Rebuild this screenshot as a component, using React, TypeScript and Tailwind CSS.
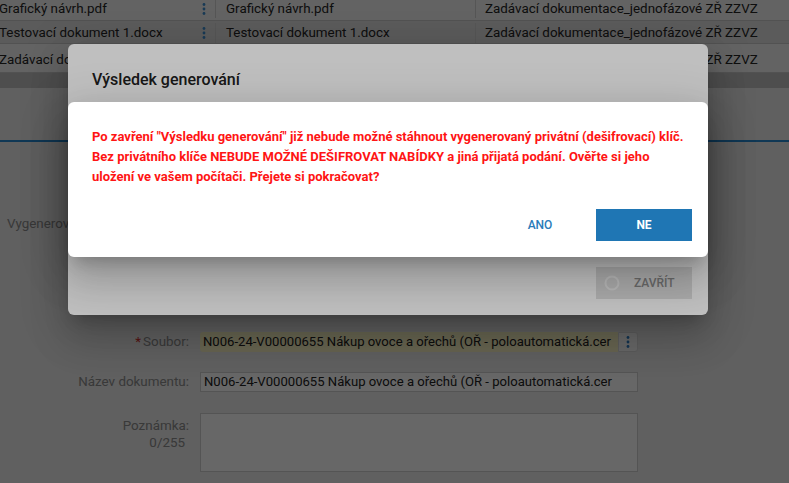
import React from "react";

function Dots({ color = "#3d8fd1" }: { color?: string }) {
  return (
    <svg width="4" height="14" viewBox="0 0 4 14" className="shrink-0">
      <circle cx="2" cy="2.5" r="1.4" fill={color} />
      <circle cx="2" cy="7" r="1.4" fill={color} />
      <circle cx="2" cy="11.5" r="1.4" fill={color} />
    </svg>
  );
}

function Row({ a, b, c, cls }: { a: string; b: string; c: string; cls: string }) {
  return (
    <div className={`flex border-b border-[#cbcbcb] ${cls}`}>
      <div className="w-[217px] shrink-0 flex items-center justify-between pr-[9px] border-r border-[#d4d4d4] -ml-[1px]">
        <span className="whitespace-nowrap">{a}</span>
        <Dots />
      </div>
      <div className="w-[260px] shrink-0 flex items-center pl-[10px] border-r border-[#d4d4d4]">
        <span className="whitespace-nowrap">{b}</span>
      </div>
      <div className="flex-1 flex items-center pl-[9px]">
        <span className="whitespace-nowrap">{c}</span>
      </div>
    </div>
  );
}

export default function App() {
  return (
    <div className="relative w-[789px] h-[483px] overflow-hidden bg-[#ececec] font-['Roboto',sans-serif]">
      {/* underlying page */}
      <div className="flex flex-col">
        <div className="bg-[#f6f6f6] text-[13.4px] text-[#262626]">
          <Row cls="h-[21px] pb-[2px]" a="Grafický návrh.pdf" b="Grafický návrh.pdf" c="Zadávací dokumentace_jednofázové ZŘ ZZVZ" />
          <Row cls="h-[23px] bg-[#e2e2e2] pt-[2px]" a="Testovací dokument 1.docx" b="Testovací dokument 1.docx" c="Zadávací dokumentace_jednofázové ZŘ ZZVZ" />
          <Row cls="h-[29px] pt-[4px]" a="Zadávací dokumentace.pdf" b="Zadávací dokumentace.pdf" c="Zadávací dokumentace_jednofázové ZŘ ZZVZ" />
        </div>
        <div className="h-[15px] bg-[#c2c2c2]" />
        <div className="h-[54px] border-b-2 border-[#2a8bd2]" />
        <div className="h-[72px]" />
        <div className="h-[20px] flex items-center pl-[7px] text-[13.4px] text-[#8c8c8c] whitespace-nowrap">
          Vygenerovaný dešifrovací klíč:
        </div>
        <div className="h-[98px]" />
        <div className="flex flex-col gap-[20px] text-[13.4px]">
          <div className="flex items-center h-[20px]">
            <div className="w-[190px] pr-[1px] text-right text-[#8c8c8c] whitespace-nowrap">
              <span className="text-[#d32f2f] mr-[2px]">*</span>Soubor:
            </div>
            <div className="ml-[10px] flex h-[20px]">
              <div className="w-[418px] bg-[#fff9c8] rounded-l-[3px] flex items-center pl-[3px] text-[13.1px] text-[#222] whitespace-nowrap overflow-hidden">
                N006-24-V00000655 Nákup ovoce a ořechů (OŘ - poloautomatická.cer
              </div>
              <div className="w-[20px] bg-white rounded-r-[3px] border border-[#e2e2e2] flex items-center justify-center">
                <Dots color="#2f80c8" />
              </div>
            </div>
          </div>
          <div className="flex items-center h-[20px]">
            <div className="w-[190px] pr-[1px] text-right text-[#8c8c8c] whitespace-nowrap">Název dokumentu:</div>
            <div className="ml-[10px] w-[438px] h-[20px] bg-white border border-[#cfcfcf] flex items-center pl-[3px] text-[13.1px] text-[#222] whitespace-nowrap overflow-hidden">
              N006-24-V00000655 Nákup ovoce a ořechů (OŘ - poloautomatická.cer
            </div>
          </div>
          <div className="flex items-start mt-[1px]">
            <div className="w-[190px] pr-[1px] text-right text-[#8c8c8c] leading-[17px] pt-[4px]">
              Poznámka:
              <br />
              <span className="pr-[4px]">0/255</span>
            </div>
            <div className="ml-[10px] w-[438px] h-[59px] bg-white border border-[#cfcfcf]" />
          </div>
        </div>
      </div>

      {/* overlay 1 */}
      <div className="absolute inset-0 bg-[rgba(0,0,0,0.46)]" />

      {/* dialog 1 */}
      <div className="absolute left-[68px] top-[44px] w-[640px] h-[271px] bg-white rounded-[6px] flex flex-col shadow-[0_11px_15px_-7px_rgba(0,0,0,0.2),0_24px_38px_3px_rgba(0,0,0,0.14),0_9px_46px_8px_rgba(0,0,0,0.12)]">
        <div className="pt-[25px] px-[24px] text-[16px] font-medium text-[#212121] leading-[22px]">
          Výsledek generování
        </div>
        <div className="flex-1" />
        <div className="flex justify-end pr-[16px] pb-[16px]">
          <div className="w-[96px] h-[32px] bg-[#e2e2e2] flex items-center pl-[8px]">
            <svg width="16" height="16" viewBox="0 0 16 16">
              <circle cx="8" cy="8" r="6.5" fill="none" stroke="#f4f4f4" strokeWidth="2" />
            </svg>
            <span className="ml-[14px] text-[12px] font-medium text-[#8c8c8c]">ZAVŘÍT</span>
          </div>
        </div>
      </div>

      {/* overlay 2 */}
      <div className="absolute inset-0 bg-[rgba(0,0,0,0.25)]" />

      {/* dialog 2 */}
      <div className="absolute left-[68px] top-[102px] w-[640px] h-[155px] bg-white rounded-[6px] flex flex-col shadow-[0_11px_15px_-7px_rgba(0,0,0,0.2),0_24px_38px_3px_rgba(0,0,0,0.14),0_9px_46px_8px_rgba(0,0,0,0.12)]">
        <div className="pt-[25px] px-[24px] text-[13px] font-bold leading-[20px] text-[#ff1414] whitespace-nowrap">
          Po zavření "Výsledku generování" již nebude možné stáhnout vygenerovaný privátní (dešifrovací) klíč.
          <br />
          Bez privátního klíče NEBUDE MOŽNÉ DEŠIFROVAT NABÍDKY a jiná přijatá podání. Ověřte si jeho
          <br />
          uložení ve vašem počítači. Přejete si pokračovat?
        </div>
        <div className="flex-1" />
        <div className="flex justify-end gap-[8px] pr-[16px] pb-[16px]">
          <div className="w-[96px] h-[32px] flex items-center justify-center text-[12px] font-medium text-[#2a7bb9]">
            ANO
          </div>
          <div className="w-[96px] h-[32px] flex items-center justify-center bg-[#1f76b4] text-[12px] font-bold text-white">
            NE
          </div>
        </div>
      </div>
    </div>
  );
}
